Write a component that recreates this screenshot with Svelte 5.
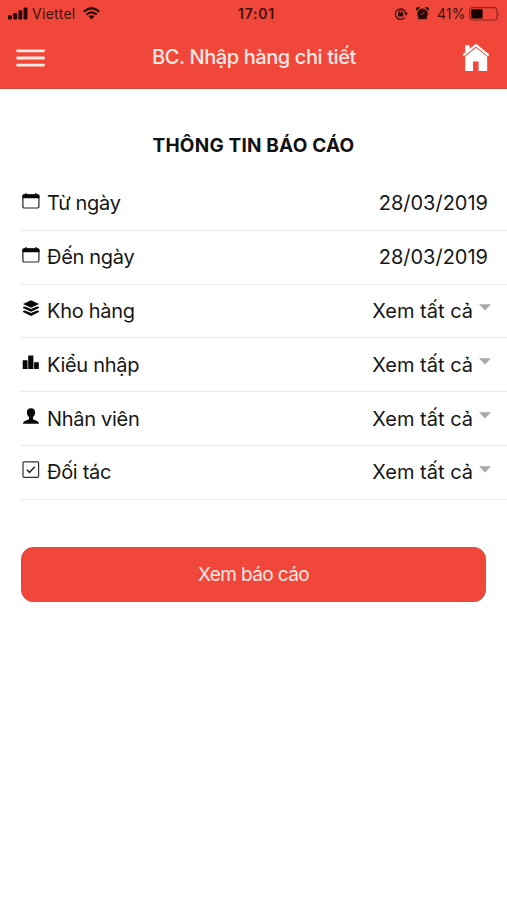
<script>
  const rows = [
    { icon: 'calendar', label: 'Từ ngày', value: '28/03/2019' },
    { icon: 'calendar', label: 'Đến ngày', value: '28/03/2019' },
    { icon: 'layers', label: 'Kho hàng', value: 'Xem tất cả', select: true },
    { icon: 'chart', label: 'Kiểu nhập', value: 'Xem tất cả', select: true },
    { icon: 'person', label: 'Nhân viên', value: 'Xem tất cả', select: true },
    { icon: 'check', label: 'Đối tác', value: 'Xem tất cả', select: true }
  ];
</script>

<div class="screen">
  <header>
    <div class="status">
      <div class="side">
        <svg class="signal" width="20" height="13" viewBox="0 0 20 13">
          <rect x="0" y="8.3" width="3.9" height="4.2" rx="1" />
          <rect x="5.2" y="6" width="3.9" height="6.5" rx="1" />
          <rect x="10.4" y="3.2" width="3.9" height="9.3" rx="1" />
          <rect x="15.6" y="0.4" width="3.9" height="12.1" rx="1" />
        </svg>
        <span class="carrier">Viettel</span>
        <svg class="wifi" width="17" height="13" viewBox="0 0 17 13">
          <path d="M.8 4.7Q8.5 -2.1 16.2 4.7" fill="none" stroke="#2b0705" stroke-width="2.3" />
          <path d="M3.4 7.6Q8.5 3.1 13.6 7.6" fill="none" stroke="#2b0705" stroke-width="2.1" />
          <path d="M5.5 9.6Q8.5 7 11.5 9.6L8.5 12.6Z" />
        </svg>
      </div>
      <span class="time">17:01</span>
      <div class="side right">
        <svg class="lock" width="14" height="13" viewBox="0 0 14 13">
          <path d="M10.9 10.3A5.3 5.3 0 1 1 11.9 6.2" fill="none" stroke="#2b0705" stroke-width="1.2" />
          <path d="M9.8 5.8L14 5.8L11.9 8.8Z" />
          <rect x="4" y="5.6" width="5.2" height="3.8" rx=".4" />
          <path d="M5.1 6V4.5a1.5 1.5 0 0 1 3 0V6" fill="none" stroke="#2b0705" stroke-width="1" />
        </svg>
        <svg class="alarm" width="13" height="13" viewBox="0 0 13 13">
          <circle cx="6.5" cy="6.9" r="5.3" />
          <path d="M.4 3.8A2.2 2.2 0 0 1 4.2 .8ZM12.6 3.8A2.2 2.2 0 0 0 8.8 .8Z" />
          <path d="M2.4 12.3L4 10.5M10.6 12.3L9 10.5" stroke="#2b0705" stroke-width="1.6" />
          <path d="M8.4 4.6L6.5 7.2H4.8" fill="none" stroke="#c23a30" stroke-width=".9" />
        </svg>
        <span class="percent">41%</span>
        <svg class="battery" width="31" height="14" viewBox="0 0 31 14">
          <rect x=".6" y=".6" width="27.4" height="12.4" rx="3" fill="none" stroke="#8c2720" stroke-width="1.1" />
          <rect x="2.2" y="2.2" width="11.4" height="9.2" rx="1" fill="#150202" />
          <path d="M29.3 4.6Q31 6.8 29.3 9Z" fill="#8c2720" />
        </svg>
      </div>
    </div>
    <div class="nav">
      <svg class="menu" width="30" height="20" viewBox="0 0 30 20">
        <path d="M1.6 2.8H27.6M1.6 10H27.6M1.6 17.2H27.6" stroke="#ffe9e4" stroke-width="2.8" stroke-linecap="round" />
      </svg>
      <h1>BC. Nhập hàng chi tiết</h1>
      <svg class="home" width="28" height="29" viewBox="0 0 28 29">
        <path d="M14 .7L.6 11.4L2 13.2L14 3.6L26 13.2L27.4 11.4Z" fill="#fff" />
        <path d="M3.2 2.2H7.6V6.3L3.2 9.6Z" fill="#fff" />
        <path d="M14 4.7L3.2 13.4V28H11V18.4H16.6V28H25.2V13.4Z" fill="#fff" />
      </svg>
    </div>
  </header>

  <main>
    <h2>THÔNG TIN BÁO CÁO</h2>
    <ul>
      {#each rows as row}
        <li>
          <svg class="icon" width="18" height="18" viewBox="0 0 18 18">
            {#if row.icon === 'calendar'}
              <rect x=".9" y="3" width="16" height="13" rx="1.2" fill="none" stroke="#222" stroke-width="1.2" />
              <path d="M.3 6.3V3.8Q.3 2.2 2 2.2H3.3V1.2H4.9V2.2H13V1.2H14.6V2.2H15.9Q17.5 2.2 17.5 3.8V6.3Z" />
            {:else if row.icon === 'layers'}
              <path d="M9 .2L17 4L9 7.8L1 4Z" />
              <path d="M1 7.1L3 6.4L9 9.1L15 6.4L17 7.1V8L9 11.8L1 8Z" />
              <path d="M1 11.1L3 10.4L9 13.1L15 10.4L17 11.1V12L9 15.9L1 12Z" />
            {:else if row.icon === 'chart'}
              <path d="M.7 6.2H5.5V15H.7ZM6.2 1.6H11.4V15H6.2ZM12.1 8.2H16.8V15H12.1Z" />
            {:else if row.icon === 'person'}
              <path d="M9 .3C6 .3 4.7 2.1 4.9 4.8C5 6.7 5.8 8 7 9V11C6.8 12.2 1.3 12 1 15.8H17C16.7 12 11.2 12.2 11 11V9C12.2 8 13 6.7 13.1 4.8C13.3 2.1 12 .3 9 .3Z" />
            {:else}
              <rect x="1" y=".9" width="15.6" height="15.4" rx="1" fill="none" stroke="#333" stroke-width="1.2" />
              <path d="M4.8 8.7L7.5 11.4L12.8 5.7" fill="none" stroke="#222" stroke-width="1.5" />
            {/if}
          </svg>
          <span class="label">{row.label}</span>
          <span class="value">{row.value}</span>
          {#if row.select}
            <svg class="caret" width="12" height="7" viewBox="0 0 12 7"><path d="M0 .3H12L6 6.6Z" fill="#a9a9a9" /></svg>
          {/if}
        </li>
      {/each}
    </ul>
    <button>Xem báo cáo</button>
  </main>
</div>

<style>
  :global(body) { margin: 0; background: #fff; }
  .screen { width: 507px; height: 900px; overflow: hidden; background: #fff; font-family: Inter, 'Liberation Sans', sans-serif; color: #161616; }
  svg { display: block; flex: none; }
  header { height: 88.5px; box-sizing: border-box; background: #f1473b; border-bottom: 1px solid #d8483b; }
  .status { height: 27px; display: grid; grid-template-columns: 1fr auto 1fr; align-items: center; color: #40100c; fill: #2b0705; font-size: 14px; line-height: 27px; }
  .side { display: flex; align-items: center; padding-left: 8px; }
  .right { justify-content: flex-end; padding: 0 7px 0 0; }
  .carrier { margin-left: 4px; width: 44px; letter-spacing: .3px; white-space: nowrap; }
  .wifi { margin-left: 7px; }
  .time { font-weight: 600; font-size: 14px; letter-spacing: .8px; margin-left: 6px; }
  .alarm { margin-left: 8px; }
  .percent { margin-left: 8px; width: 28px; white-space: nowrap; letter-spacing: .1px; }
  .battery { margin-left: 4px; }
  .nav { height: 60px; display: flex; align-items: center; justify-content: space-between; padding: 0 17px 0 16px; }
  .menu { margin-top: 2px; }
  h1 { margin: 0; font-weight: 500; font-size: 20px; line-height: 60px; color: #ffe9e4; letter-spacing: -.4px; white-space: nowrap; }
  h2 { margin: 0; padding-top: 43.5px; height: 45px; text-align: center; font-size: 19px; line-height: 28px; font-weight: 700; letter-spacing: .2px; color: #111; }
  ul { list-style: none; margin: 0 0 0 20px; padding: 0; }
  li { height: 53.8px; box-sizing: border-box; border-bottom: 1.5px solid #e9e9e9; display: flex; align-items: center; padding: 0 19px 0 2px; font-size: 20px; line-height: 28px; }
  .icon { margin: 0 .5px 4px -.5px; fill: #080808; }
  .label { margin-left: 7px; flex: 1; letter-spacing: -.3px; }
  .value { letter-spacing: 0; }
  .caret { margin: 0 -3px 6px 6px; }
  button { display: block; margin: 47px 21px 0; width: 465px; height: 55px; border: 1px solid #dc4c3e; border-radius: 12px; background: #f1473b; color: #ffe9e4; font: 400 19px/53px Inter, sans-serif; letter-spacing: -.6px; padding: 0; }
</style>
